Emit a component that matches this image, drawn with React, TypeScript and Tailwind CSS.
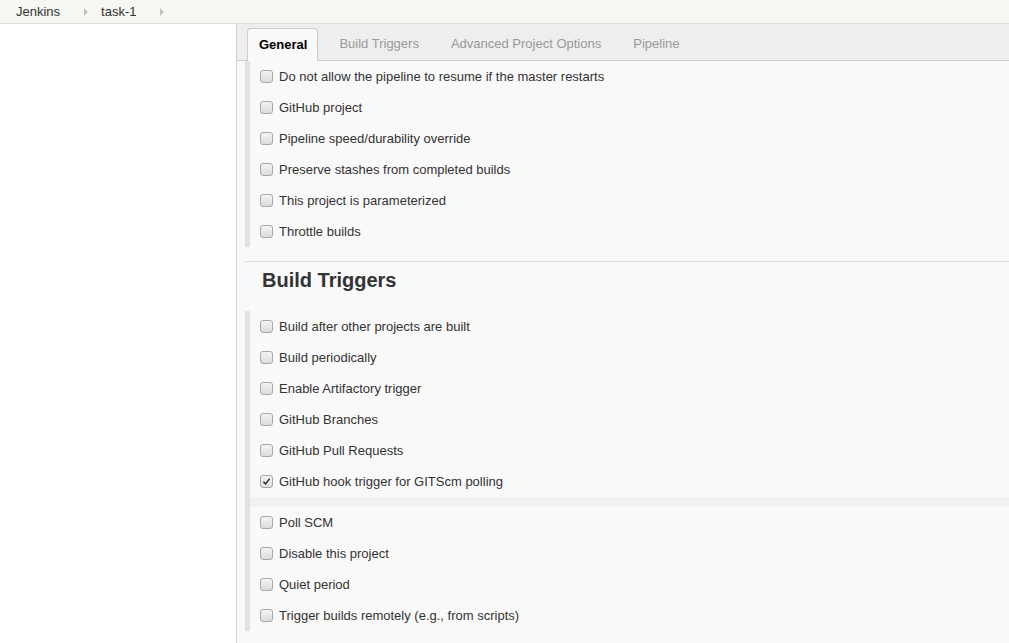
import React from "react"

const general = [
  "Do not allow the pipeline to resume if the master restarts",
  "GitHub project",
  "Pipeline speed/durability override",
  "Preserve stashes from completed builds",
  "This project is parameterized",
  "Throttle builds",
]

const triggersA = [
  { label: "Build after other projects are built" },
  { label: "Build periodically" },
  { label: "Enable Artifactory trigger" },
  { label: "GitHub Branches" },
  { label: "GitHub Pull Requests" },
  { label: "GitHub hook trigger for GITScm polling", checked: true },
]

const triggersB = [
  "Poll SCM",
  "Disable this project",
  "Quiet period",
  "Trigger builds remotely (e.g., from scripts)",
]

const tabs = ["General", "Build Triggers", "Advanced Project Options", "Pipeline"]

function Checkbox({ checked = false }: { checked?: boolean }) {
  return (
    <span className="relative flex h-[13px] w-[13px] shrink-0 items-center justify-center rounded-[3px] border border-[#a8a8a8] bg-gradient-to-b from-[#f4f4f4] to-[#dcdcdc]">
      {checked && (
        <svg viewBox="0 0 10 10" className="h-[9px] w-[9px]">
          <path d="M1.5 5.2 L4 7.6 L8.6 1.8" fill="none" stroke="#333" strokeWidth="1.7" />
        </svg>
      )}
    </span>
  )
}

function Row({ label, checked }: { label: string; checked?: boolean }) {
  return (
    <div className="flex h-[31px] items-center pl-[10px]">
      <Checkbox checked={checked} />
      <span className="ml-[6px] text-[13px] text-[#333]">{label}</span>
    </div>
  )
}

function Crumb() {
  return <span className="ml-[24px] mr-[13px] h-0 w-0 border-y-[4px] border-l-[4px] border-y-transparent border-l-[#c4c4c4]" />
}

export default function App() {
  return (
    <div className="flex h-[643px] w-[1009px] flex-col overflow-hidden bg-white font-['Liberation_Sans',Arial,sans-serif]">
      {/* breadcrumbs */}
      <div className="flex h-[24px] shrink-0 items-center border-b border-[#dcdcdc] bg-[#f6f8f2] pl-[16px] text-[13px] text-[#333]">
        <span>Jenkins</span>
        <Crumb />
        <span>task-1</span>
        <Crumb />
      </div>

      <div className="flex flex-1">
        <div className="w-[237px] shrink-0 border-r border-[#d0d0d0] bg-white" />

        <div className="flex-1 bg-[#f9f9f9]">
          {/* tab bar */}
          <div className="flex h-[37px] items-end gap-[10px] border-b border-[#cccccc] bg-[#eeeeee] pl-[10px]">
            {tabs.map((t, i) =>
              i === 0 ? (
                <div
                  key={t}
                  className="-mb-px flex h-[33px] items-center rounded-t-[4px] border border-b-0 border-[#cccccc] bg-[#f9f9f9] pl-[11px] pr-[10px] text-[13px] font-bold text-black"
                >
                  {t}
                </div>
              ) : (
                <div key={t} className="flex h-[33px] items-center px-[11px] text-[13px] text-[#999]">
                  {t}
                </div>
              )
            )}
          </div>

          <div className="pl-[8px]">
            <div className="border-l-[5px] border-[#e2e2e2]">
              {general.map((g) => (
                <Row key={g} label={g} />
              ))}
            </div>

            <div className="mt-[14px] border-t border-[#dddddd]" />

            <h2 className="flex h-[36px] items-center pl-[17px] text-[20px] font-bold text-[#333]">
              Build Triggers
            </h2>

            <div className="mt-[13px] border-l-[5px] border-[#e2e2e2]">
              {triggersA.map((t) => (
                <Row key={t.label} label={t.label} checked={t.checked} />
              ))}
              <div className="h-[10px] bg-[#f1f1f1]" />
              {triggersB.map((t) => (
                <Row key={t} label={t} />
              ))}
            </div>
          </div>
        </div>
      </div>
    </div>
  )
}
